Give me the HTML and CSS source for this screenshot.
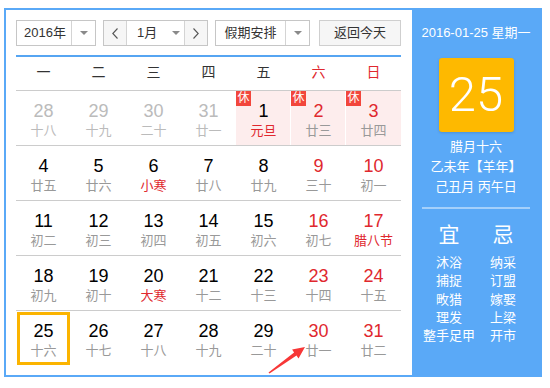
FILE: index.html
```html
<!DOCTYPE html>
<html lang="zh-CN">
<head>
    <meta charset="UTF-8">
    <title>万年历</title>
    <link rel="stylesheet" href="styles.css">
</head>
<body>

<div class="calendar">
    <!-- Calendario principal -->
    <div class="cal-main">
        <div class="toolbar">
            <div class="select select-year">
                <span class="select-text">2016年</span>
                <span class="select-arrow"><i class="caret"></i></span>
            </div>
            <div class="month-picker">
                <span class="nav-btn">
                    <svg width="6" height="11" viewBox="0 0 6 11"><polyline points="5.5,0.5 0.8,5.5 5.5,10.5" fill="none" stroke="#555" stroke-width="1.1"/></svg>
                </span>
                <span class="month-select">1月<i class="caret"></i></span>
                <span class="nav-btn">
                    <svg width="6" height="11" viewBox="0 0 6 11"><polyline points="0.5,0.5 5.2,5.5 0.5,10.5" fill="none" stroke="#555" stroke-width="1.1"/></svg>
                </span>
            </div>
            <div class="select select-holiday">
                <span class="select-text">假期安排</span>
                <span class="select-arrow"><i class="caret"></i></span>
            </div>
            <span class="today-btn">返回今天</span>
        </div>

        <div class="weekdays">
            <span>一</span><span>二</span><span>三</span><span>四</span><span>五</span>
            <span class="weekend">六</span><span class="weekend">日</span>
        </div>

        <div class="days">
            <div class="day other"><b>28</b><em>十八</em></div>
            <div class="day other"><b>29</b><em>十九</em></div>
            <div class="day other"><b>30</b><em>二十</em></div>
            <div class="day other"><b>31</b><em>廿一</em></div>
            <div class="day holiday"><span class="rest">休</span><b>1</b><em class="festival">元旦</em></div>
            <div class="day holiday weekend"><span class="rest">休</span><b>2</b><em>廿三</em></div>
            <div class="day holiday weekend last"><span class="rest">休</span><b>3</b><em>廿四</em></div>

            <div class="day"><b>4</b><em>廿五</em></div>
            <div class="day"><b>5</b><em>廿六</em></div>
            <div class="day"><b>6</b><em class="festival">小寒</em></div>
            <div class="day"><b>7</b><em>廿八</em></div>
            <div class="day"><b>8</b><em>廿九</em></div>
            <div class="day weekend"><b>9</b><em>三十</em></div>
            <div class="day weekend"><b>10</b><em>初一</em></div>

            <div class="day"><b>11</b><em>初二</em></div>
            <div class="day"><b>12</b><em>初三</em></div>
            <div class="day"><b>13</b><em>初四</em></div>
            <div class="day"><b>14</b><em>初五</em></div>
            <div class="day"><b>15</b><em>初六</em></div>
            <div class="day weekend"><b>16</b><em>初七</em></div>
            <div class="day weekend"><b>17</b><em class="festival">腊八节</em></div>

            <div class="day"><b>18</b><em>初九</em></div>
            <div class="day"><b>19</b><em>初十</em></div>
            <div class="day"><b>20</b><em class="festival">大寒</em></div>
            <div class="day"><b>21</b><em>十二</em></div>
            <div class="day"><b>22</b><em>十三</em></div>
            <div class="day weekend"><b>23</b><em>十四</em></div>
            <div class="day weekend"><b>24</b><em>十五</em></div>

            <div class="day today"><b>25</b><em>十六</em></div>
            <div class="day"><b>26</b><em>十七</em></div>
            <div class="day"><b>27</b><em>十八</em></div>
            <div class="day"><b>28</b><em>十九</em></div>
            <div class="day"><b>29</b><em>二十</em></div>
            <div class="day weekend"><b>30</b><em>廿一</em></div>
            <div class="day weekend"><b>31</b><em>廿二</em></div>
        </div>
    </div>

    <!-- Panel lateral -->
    <div class="cal-side">
        <div class="side-date">2016-01-25 星期一</div>
        <div class="big-day">25</div>
        <div class="lunar-info">
            <p>腊月十六</p>
            <p>乙未年【羊年】</p>
            <p>己丑月 丙午日</p>
        </div>
        <div class="side-line"></div>
        <div class="yiji">
            <div class="yiji-col">
                <h3>宜</h3>
                <p>沐浴</p><p>捕捉</p><p>畋猎</p><p>理发</p><p>整手足甲</p>
            </div>
            <div class="yiji-col">
                <h3>忌</h3>
                <p>纳采</p><p>订盟</p><p>嫁娶</p><p>上梁</p><p>开市</p>
            </div>
        </div>
    </div>

    <!-- Flecha de anotación -->
    <svg class="pointer" width="50" height="40" viewBox="0 0 50 40">
        <polygon points="3.5,29.4 29.1,9.4 27.1,6.5 40,4 33.5,15.5 31.5,12.6 4.5,30.6" fill="#f73737"/>
    </svg>
</div>

</body>
</html>
```

FILE: styles.css
```css
body {
    margin: 0;
    padding: 8px 0 0 4px;
    background-color: #fff;
    font-family: "Liberation Sans", "Noto Sans CJK SC", sans-serif;
    color: #000;
}

.calendar {
    position: relative;
    display: flex;
    width: 534px;
    height: 365px;
    border: 2px solid #5aa9f7;
}

/* Zona izquierda */
.cal-main {
    width: 385px;
    padding: 10px 11px 0 10px;
    background-color: #fff;
}

.toolbar {
    display: flex;
    height: 26px;
    font-size: 13px;
    color: #333;
}

.select {
    display: flex;
    box-sizing: border-box;
    height: 26px;
    border: 1px solid #c6c6c6;
    background-color: #fff;
}

.select-year {
    width: 80px;
}

.select-holiday {
    width: 95px;
    margin-left: 7px;
}

.select-text {
    flex: 1;
    line-height: 24px;
    text-align: center;
    border-right: 1px solid #d4d4d4;
}

.select-year .select-text {
    padding-left: 2px;
}

.select-arrow {
    width: 23px;
    display: flex;
    align-items: center;
    justify-content: center;
}

.caret {
    display: inline-block;
    width: 0;
    height: 0;
    border-left: 4px solid transparent;
    border-right: 4px solid transparent;
    border-top: 4px solid #8a8a8a;
}

.month-picker {
    display: flex;
    box-sizing: border-box;
    width: 105px;
    height: 26px;
    margin-left: 7px;
    border: 1px solid #c6c6c6;
}

.nav-btn {
    width: 22px;
    display: flex;
    align-items: center;
    justify-content: center;
    background-color: #f6f6f6;
}

.nav-btn:first-child {
    border-right: 1px solid #d4d4d4;
}

.nav-btn:last-child {
    border-left: 1px solid #d4d4d4;
}

.month-select {
    flex: 1;
    display: flex;
    align-items: center;
    padding-left: 10px;
    line-height: 24px;
}

.month-select .caret {
    margin-left: 15px;
}

.today-btn {
    box-sizing: border-box;
    width: 82px;
    height: 26px;
    margin-left: 9px;
    line-height: 24px;
    text-align: center;
    border: 1px solid #cfcfcf;
    background-color: #f6f6f6;
}

.weekdays {
    display: grid;
    grid-template-columns: repeat(7, 55px);
    height: 33px;
    margin-top: 9px;
    border-top: 2px solid #56a5f2;
    border-bottom: 1px solid #ccc;
    font-size: 14px;
    line-height: 31px;
    text-align: center;
    color: #333;
}

.weekdays .weekend {
    color: #e0282e;
}

.days {
    display: grid;
    grid-template-columns: repeat(7, 55px);
    grid-auto-rows: 55px;
}

.day {
    position: relative;
    box-sizing: border-box;
    padding-top: 10px;
    border-bottom: 1px solid #ccc;
    text-align: center;
}

.day:nth-last-child(-n+7) {
    border-bottom: none;
}

.day b {
    display: block;
    font-size: 18px;
    font-weight: normal;
    line-height: 20px;
}

.day em {
    display: block;
    margin-top: 2px;
    font-size: 13px;
    font-style: normal;
    line-height: 16px;
    color: #999;
}

.day.weekend b {
    color: #e0282e;
}

.day em.festival {
    color: #e0282e;
}

.day.other b,
.day.other em {
    color: #bbb;
}

.day.holiday {
    background-color: #fdeded;
    box-shadow: inset -1px 0 #fff;
}

.day.holiday.last {
    box-shadow: none;
}

.rest {
    position: absolute;
    top: 0;
    left: 0;
    width: 15px;
    height: 15px;
    font-size: 12px;
    line-height: 15px;
    color: #fff;
    background-color: #f2463c;
}

.day.today {
    outline: 3px solid #fbb400;
    outline-offset: -4px;
}

/* Panel derecho */
.cal-side {
    width: 108px;
    padding: 13px 10px 0;
    background-color: #5aa9f7;
    color: #fff;
    text-align: center;
    font-size: 13px;
}

.side-date {
    line-height: 20px;
    margin: 0 -6px;
}

.big-day {
    width: 75px;
    height: 74px;
    margin: 15px auto 0;
    border-radius: 3px;
    background-color: #feb900;
    box-shadow: 0 1px 3px rgba(0, 0, 0, 0.15);
    font-family: Roboto, "Liberation Sans", sans-serif;
    font-weight: 300;
    font-size: 49px;
    line-height: 74px;
}

.lunar-info {
    margin-top: 5px;
}

.lunar-info p {
    margin: 0;
    line-height: 20px;
}

.side-line {
    height: 2px;
    margin-top: 10px;
    background-color: rgba(255, 255, 255, 0.45);
}

.yiji {
    display: flex;
    margin-top: 11px;
}

.yiji-col {
    flex: 1;
}

.yiji-col h3 {
    margin: 0 0 4px;
    font-size: 21px;
    font-weight: normal;
    line-height: 30px;
}

.yiji-col p {
    margin: 0;
    line-height: 18.3px;
    white-space: nowrap;
}

/* Flecha */
.pointer {
    position: absolute;
    left: 259px;
    top: 333px;
}
```
